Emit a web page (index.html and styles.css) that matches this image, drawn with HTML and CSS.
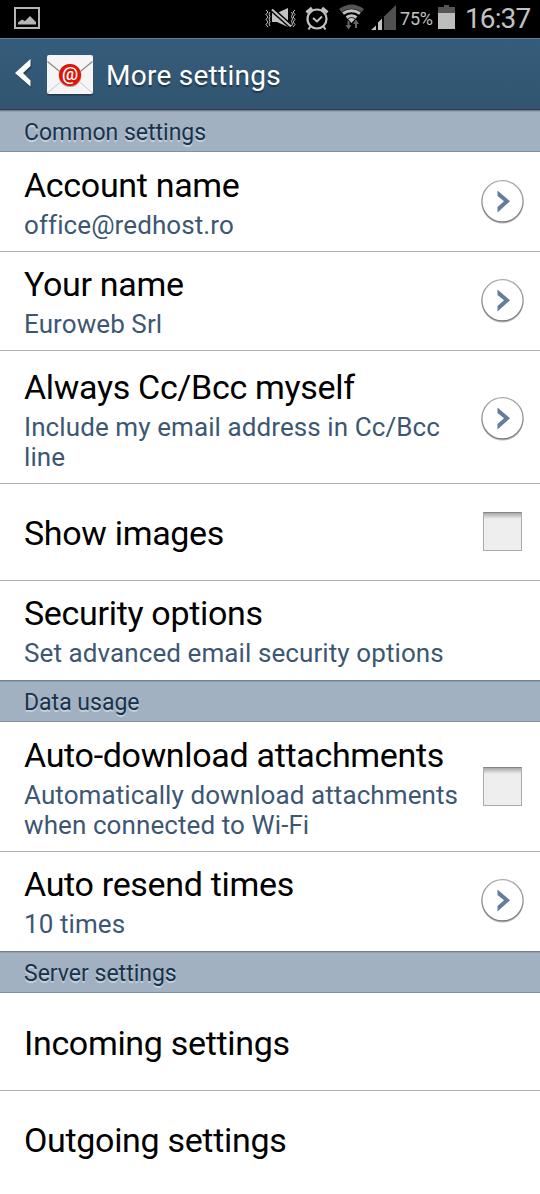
FILE: index.html
```
<!DOCTYPE html>
<html lang="en">
<head>
<meta charset="utf-8">
<title>More settings</title>
<link rel="stylesheet" href="styles.css">
</head>
<body>
<svg class="defs" width="0" height="0">
  <defs>
    <linearGradient id="disc" x1="0" y1="0" x2="0" y2="1"><stop offset="0" stop-color="#aaa"/><stop offset="1" stop-color="#777"/></linearGradient>
    <symbol id="go" viewBox="0 0 46 46">
      <circle cx="23.500" cy="23.600" r="21" fill="#bbb"/>
      <circle cx="23.500" cy="22.300" r="20.600" fill="#fff" stroke="url(#disc)" stroke-width="1.200"/>
      <path d="M18.500 11.500l12.500 10.800-12.500 11.200v-5.500l6.500-5.700-6.500-5.300z" fill="#647d9b"/>
    </symbol>
  </defs>
</svg>
<div class="status">
  <svg class="shot" width="26" height="22" viewBox="0 0 26 22"><path d="M1 1h24v20H1z" fill="none" stroke="#b5b5b5" stroke-width="2"/><path d="M4 17.500v-2l4-3 3 1.500 5-5 3 3 3 3v2.500z" fill="#b5b5b5"/></svg>
  <svg class="icons" width="140" height="38" viewBox="0 0 140 38">
    <path d="M12 13h5l11-5v19l-11-5h-5z" fill="#c2c2c2"/>
    <path d="M12 9.500l19 17" stroke="#000" stroke-width="5"/>
    <g fill="none" stroke="#c2c2c2">
      <path d="M6 10l2 2-2 2.500 2 2.500-2 2.500 2 2.500-2 2.500 2 2.500M10 12l-1 2 1 2.500-1 2.500 1 2.500-1 2.500 1 2M35 10l-2 2 2 2.500-2 2.500 2 2.500-2 2.500 2 2.500-2 2.500M31.500 12l1 2-1 2.500 1 2.500-1 2.500 1 2.500-1 2" stroke-width="1"/>
      <path d="M12 9.500l19 17" stroke-width="2"/>
      <circle cx="57" cy="19" r="9.500" stroke-width="2.200"/>
      <path d="M53 18l4 3.500 5-5M50.500 26.500l-2 3M63.500 26.500l2 3" stroke-width="2"/>
      <path d="M46.500 12.500l5.500-4.500M67.500 12.500L62 8" stroke-width="3.200"/>
    </g>
    <path d="M79 9q12.500-9 25 0l-2.500 3q-10-6.500-20 0z" fill="#555"/>
    <g fill="none" stroke="#c2c2c2" stroke-width="3"><path d="M83 13.500q8.500-5.500 17 0M86.500 17.500q5-3.500 10 0"/></g>
    <path d="M88 19q3.500-2 7 0l-3.500 4z" fill="#c2c2c2"/>
    <path d="M87.500 21h2v4h2l-3 4.500-3-4.500h2zM95 28h2v-4h2l-3-4.500-3 4.500h2z" fill="#666"/>
    <path d="M111 30l5-4.500v4.500zM118 30v-7.500l4-4v11.500z" fill="#c2c2c2"/><path d="M124 30V16.500l12-11.500v25z" fill="#505050"/>
  </svg>
  <span class="percent">75%</span>
  <svg class="battery" width="18" height="24" viewBox="0 0 18 24"><path d="M0 2h6V0h5v2h6v7H0z" fill="#555"/><path d="M0 8h17v16H0z" fill="#bdbdbd"/></svg>
  <span class="clock">16:37</span>
</div>
<header class="bar">
  <svg class="back" width="18" height="32" viewBox="0 0 18 32"><path d="M15.500 1v7L8 15l7.500 7.500v6L0 15z" fill="#fff"/></svg>
  <svg class="mail" width="48" height="44" viewBox="0 0 48 44">
    <rect x="1" y="2" width="46" height="39.500" rx="2" fill="#23394b"/>
    <rect x="1" y="1" width="46" height="39" rx="2" fill="#f5f5f5"/>
    <path d="M1.500 39L19 24M46.500 39L29 24" stroke="#c9c9c9" fill="none"/>
    <path d="M1.500 7.500L24 26 46.500 7.500" stroke="#888" stroke-width="1.200" fill="none"/>
    <circle cx="24" cy="21.500" r="11.500" fill="#b9aaa8"/><circle cx="24" cy="21" r="11" fill="#df1508"/>
    <text class="at" x="24" y="25.500" text-anchor="middle">@</text>
  </svg>
  <h1 class="heading">More settings</h1>
</header>
<h2 class="section"><span>Common settings</span></h2>
<div class="row tall first"><div class="text"><div class="title">Account name</div><div class="sub">office@redhost.ro</div></div><svg class="go"><use href="#go"/></svg></div>
<div class="row tall"><div class="text"><div class="title">Your name</div><div class="sub">Euroweb Srl</div></div><svg class="go"><use href="#go"/></svg></div>
<div class="row wrap"><div class="text"><div class="title">Always Cc/Bcc myself</div><div class="sub">Include my email address in Cc/Bcc<br>line</div></div><svg class="go"><use href="#go"/></svg></div>
<div class="row single"><div class="text"><div class="title">Show images</div></div><span class="check"></span></div>
<div class="row tall last"><div class="text"><div class="title">Security options</div><div class="sub">Set advanced email security options</div></div></div>
<h2 class="section"><span>Data usage</span></h2>
<div class="row download"><div class="text"><div class="title">Auto-download attachments</div><div class="sub">Automatically download attachments<br>when connected to Wi-Fi</div></div><span class="check"></span></div>
<div class="row tall last"><div class="text"><div class="title">Auto resend times</div><div class="sub">10 times</div></div><svg class="go"><use href="#go"/></svg></div>
<h2 class="section"><span>Server settings</span></h2>
<div class="row server"><div class="text"><div class="title">Incoming settings</div></div></div>
<div class="row server end"><div class="text"><div class="title">Outgoing settings</div></div></div>
</body>
</html>
```
FILE: styles.css
```
* { box-sizing: border-box; }
body { margin: 0; width: 540px; height: 1194px; overflow: hidden; background: #fff; font-family: Roboto, sans-serif; }
.defs { display: block; }
.status { height: 38px; background: #000; display: flex; align-items: flex-start; color: #c2c2c2; }
.shot { margin: 7px 0 0 14px; flex: none; }
.icons { margin-left: 220px; flex: none; }
.percent { width: 34px; font-size: 18px; line-height: 38px; white-space: nowrap; letter-spacing: -.2px; }
.battery { margin: 5px 0 0 4px; flex: none; }
.clock { margin-left: 9px; font-size: 28px; line-height: 37px; white-space: nowrap; letter-spacing: -.9px; }
.bar { height: 72px; display: flex; align-items: flex-start; border-top: 1px solid #5d7f9b; border-bottom: 1px solid #2c3c4a; background: linear-gradient(#355c7b, #315570); }
.back { margin: 19px 0 0 15px; filter: drop-shadow(1px 2px 0 #284458); }
.mail { margin: 15px 0 0 13px; }
.at { font: 500 18px Roboto, sans-serif; fill: #fff; }
.heading { margin: 1px 0 0 12px; font-size: 28px; font-weight: 400; line-height: 71px; color: #fff; text-shadow: 0 2px 1px #203746; letter-spacing: .26px; }
.section { margin: 0; height: 42px; padding-left: 24px; border-top: 1px solid #71818d; border-bottom: 1px solid #7f919f; box-shadow: inset 0 1px #909fac; background: #a1b1c1; color: #17324c; font-size: 23px; font-weight: 400; line-height: 43px; text-shadow: 0 2px 1px #c8d3dc; }
.row { display: flex; align-items: center; padding: 0 15px 0 24px; border-bottom: 1px solid #b0b0b0; }
.row.tall { height: 99px; }
.row.first { height: 100px; padding-top: 1px; }
.row.wrap { height: 133px; padding-top: 4px; }
.row.single { height: 97px; }
.row.single .text { padding-top: 2px; }
.row.single .check { margin-bottom: 2px; }
.row.download { height: 130px; }
.row.download .text { padding-top: 2px; }
.row.server { height: 98px; }
.row.server:not(.end) { padding-top: 2px; }
.row.last, .row.end { border-bottom: 0; }
.row.last .go { margin-bottom: 2px; }
.text { flex: 1; white-space: nowrap; }
.title { font-size: 34px; line-height: 40px; letter-spacing: -.32px; color: #000; }
.sub { margin-top: 5px; font-size: 26px; line-height: 30px; letter-spacing: .09px; color: #3d5773; }
.go { width: 46px; height: 46px; flex: none; }
.check { width: 39px; height: 39px; margin-right: 3px; flex: none; border: 1px solid #aaa; border-top-color: #858585; background: linear-gradient(#a8a8a8, #eee 6px); }
```
